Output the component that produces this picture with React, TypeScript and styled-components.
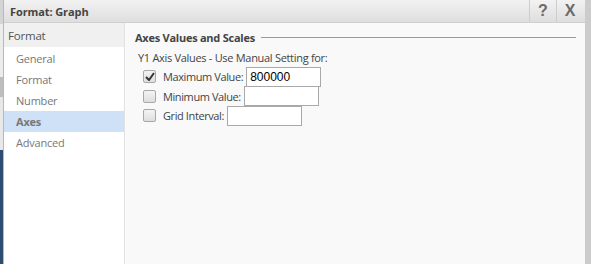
import React from 'react';
import styled, { createGlobalStyle } from 'styled-components';

const GlobalStyle = createGlobalStyle`
    html, body {
        margin: 0;
        padding: 0;
        width: 591px;
        height: 264px;
        overflow: hidden;
        background: #cfcfcf;
        font-family: "Open Sans", "DejaVu Sans", sans-serif;
    }
`;

const Backdrop = styled.div`
    width: 591px;
    height: 264px;
    display: grid;
    grid-template-columns: 3px 582px 6px;
    background: #cccccc;
`;

const Behind = styled.div`
    display: grid;
    grid-template-rows: 24px 53px 20px 53px 1fr;
    background: #e4e4e4;
`;

const Strip = styled.div<{ $tone: string }>`
    background: ${(p) => p.$tone};
`;

const Dialog = styled.div`
    display: flex;
    flex-direction: column;
    border-left: 1px solid #b8b8b8;
    background: #f9f9f9;
`;

const TitleBar = styled.div`
    height: 22px;
    display: flex;
    align-items: center;
    padding-left: 6px;
    padding-right: 2px;
    background: linear-gradient(#f2f2f2, #dedede);
    border-bottom: 1px solid #d0d0d0;
`;

const Title = styled.div`
    flex: 1;
    font-size: 11px;
    font-weight: bold;
    letter-spacing: -0.1px;
    color: #444;
`;

const TitleButton = styled.div`
    width: 26px;
    height: 22px;
    display: flex;
    align-items: center;
    justify-content: center;
    border-left: 1px solid #cdcdcd;
    font-family: "Liberation Sans", Arial, sans-serif;
    font-size: 16px;
    font-weight: bold;
    color: #6a6a6a;
`;

const Body = styled.div`
    flex: 1;
    display: flex;
`;

const Sidebar = styled.div`
    width: 120px;
    background: #ffffff;
    border-right: 1px solid #e2e2e2;
`;

const SideHeader = styled.div`
    height: 24px;
    display: flex;
    align-items: center;
    padding-left: 4px;
    background: #f0f0f0;
    font-size: 11.5px;
    letter-spacing: -0.2px;
    color: #555;
    margin-bottom: 1px;
`;

const SideItem = styled.div<{ $active?: boolean }>`
    height: 21px;
    display: flex;
    align-items: center;
    padding-left: 12px;
    font-size: 11px;
    letter-spacing: -0.2px;
    color: #777;
    font-weight: ${(p) => (p.$active ? 'bold' : 'normal')};
    background: ${(p) => (p.$active ? '#cfe1f7' : 'transparent')};
`;

const Content = styled.div`
    flex: 1;
    padding: 6px 9px 0 10px;
`;

const Legend = styled.div`
    display: flex;
    align-items: center;
    gap: 6px;
    font-size: 11px;
    font-weight: bold;
    letter-spacing: -0.25px;
    color: #444;
    height: 16px;
`;

const Rule = styled.div`
    flex: 1;
    height: 1px;
    background: #9a9a9a;
`;

const Lead = styled.div`
    font-size: 11px;
    letter-spacing: -0.3px;
    color: #444;
    margin: 5px 0 0 3px;
    height: 17px;
`;

const Row = styled.label`
    display: flex;
    align-items: center;
    height: 19.5px;
    padding-left: 8px;
    font-size: 11px;
    letter-spacing: -0.4px;
    color: #444;
`;

const Box = styled.span`
    width: 11px;
    height: 11px;
    border: 1px solid #a8a8a8;
    border-radius: 2px;
    background: linear-gradient(#f4f4f4, #dedede);
    margin-right: 7px;
    display: flex;
    align-items: center;
    justify-content: center;
`;

const Field = styled.div`
    width: 75px;
    height: 20px;
    margin-left: 3px;
    border: 1px solid #a9a9a9;
    background: #fff;
    font-family: "Liberation Sans", Arial, sans-serif;
    font-size: 12px;
    letter-spacing: 0;
    color: #000;
    display: flex;
    align-items: center;
    padding-left: 3px;
    box-sizing: border-box;
`;

const Check = () => (
    <svg width="10" height="9" viewBox="0 0 10 9">
        <path d="M1 5 L4 8 L9 1" fill="none" stroke="#333" strokeWidth="2" />
    </svg>
);

const fields = [
    { label: 'Maximum Value:', value: '800000', checked: true },
    { label: 'Minimum Value:', value: '', checked: false },
    { label: 'Grid Interval:', value: '', checked: false },
];

const menu = ['General', 'Format', 'Number', 'Axes', 'Advanced'];

export default function App() {
    return (
        <>
            <GlobalStyle />
            <Backdrop>
                <Behind>
                    <Strip $tone="#d4d4d4" />
                    <Strip $tone="#ececec" />
                    <Strip $tone="#bdbdbd" />
                    <Strip $tone="#e8e8e8" />
                    <Strip $tone="#2c4c72" />
                </Behind>
                <Dialog>
                    <TitleBar>
                        <Title>Format: Graph</Title>
                        <TitleButton>?</TitleButton>
                        <TitleButton>X</TitleButton>
                    </TitleBar>
                    <Body>
                        <Sidebar>
                            <SideHeader>Format</SideHeader>
                            {menu.map((m) => (
                                <SideItem key={m} $active={m === 'Axes'}>{m}</SideItem>
                            ))}
                        </Sidebar>
                        <Content>
                            <Legend>
                                Axes Values and Scales
                                <Rule />
                            </Legend>
                            <Lead>Y1 Axis Values - Use Manual Setting for:</Lead>
                            {fields.map((f) => (
                                <Row key={f.label}>
                                    <Box>{f.checked && <Check />}</Box>
                                    {f.label}
                                    <Field>{f.value}</Field>
                                </Row>
                            ))}
                        </Content>
                    </Body>
                </Dialog>
            </Backdrop>
        </>
    );
}
